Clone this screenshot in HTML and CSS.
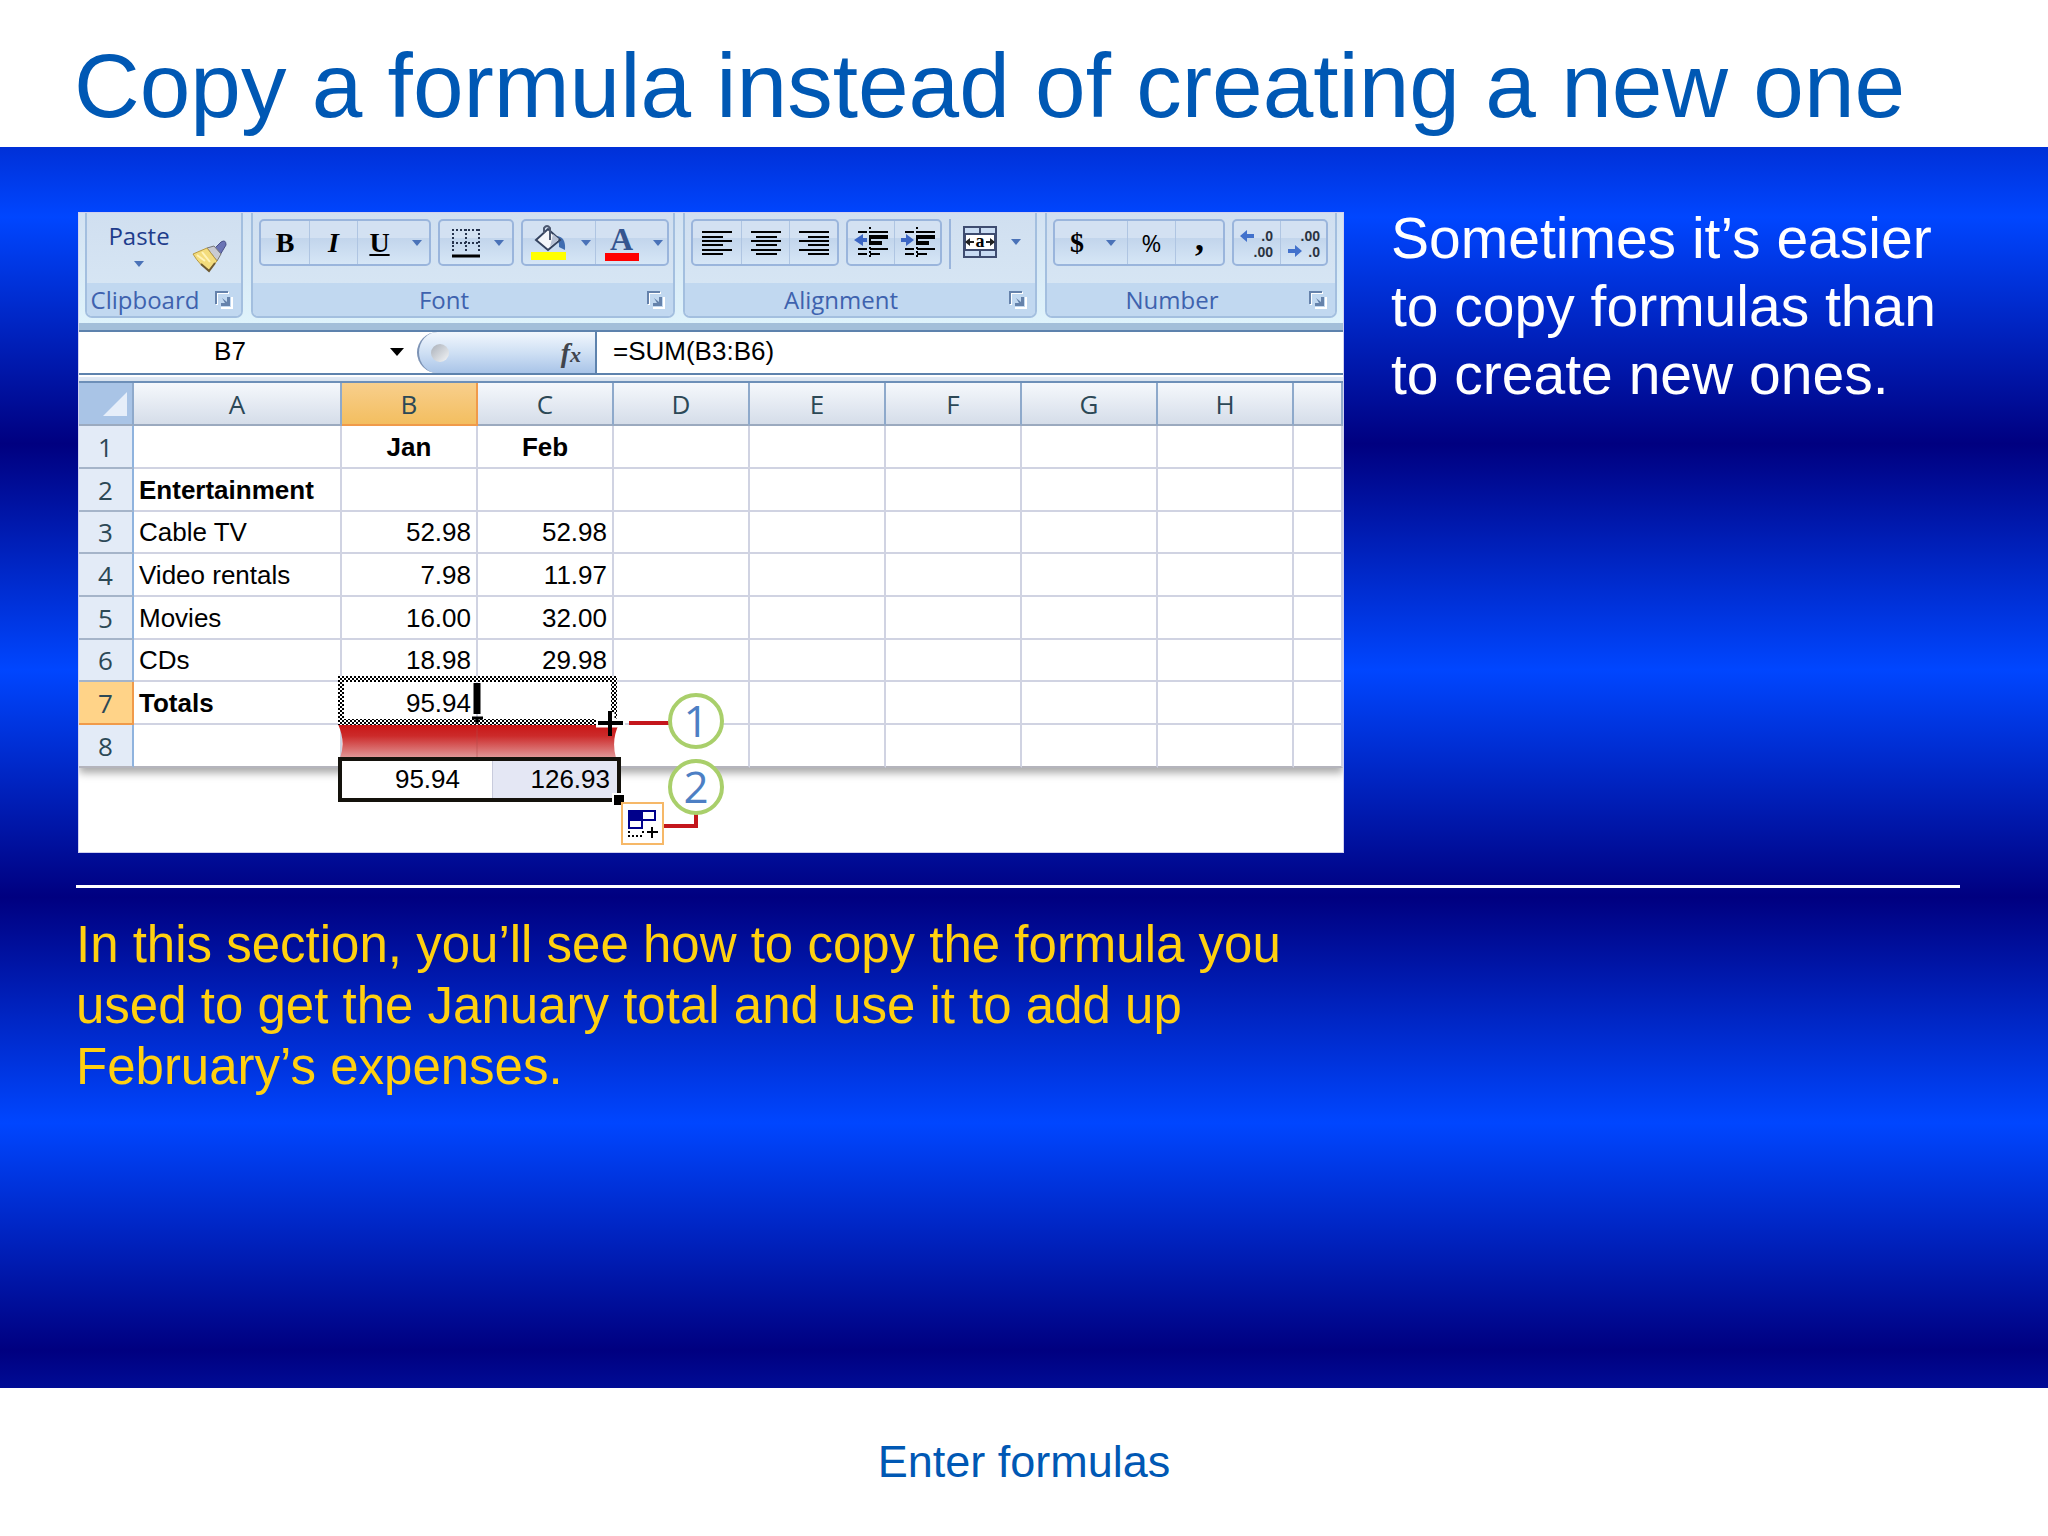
FILE: index.html
```html
<!DOCTYPE html>
<html lang="en">
<head>
    <meta charset="UTF-8">
    <meta name="viewport" content="width=device-width, initial-scale=1.0">
    <title>Enter formulas</title>
    <link rel="stylesheet" href="styles.css">
</head>
<body>
    <header class="slide-header">
        <h1>Copy a formula instead of creating a new one</h1>
    </header>

    <main class="slide-body">
        <div class="intro">
            <div class="excel">
                <!-- Ribbon -->
                <div class="ribbon">
                    <section class="group group-clipboard">
                        <div class="group-tools">
                            <button class="paste">Paste
                                <svg class="caret" viewBox="0 0 10 6"><path d="M0 0h10L5 6z"/></svg>
                            </button>
                            <button class="painter" aria-label="Format Painter">
                                <svg width="36" height="34" viewBox="0 0 36 34">
                                    <path d="M21 11L29 3q5-3 5 3l-6 10z" fill="#6b74b5" stroke="#4a5088"/>
                                    <path d="M15 9l7-2 7 8-4 7z" fill="#c9cbd2" stroke="#777"/>
                                    <path d="M1 15l14-6 10 13-8 9Q8 27 1 15z" fill="#f3dc7c" stroke="#b89a45"/>
                                    <path d="M9 25l8 7 6-8" fill="none" stroke="#6e5a30" stroke-width="2"/>
                                    <path d="M5 16l8 6M10 13l8 10" stroke="#fff3b8" stroke-width="2"/>
                                </svg>
                            </button>
                        </div>
                        <footer class="group-name"><span>Clipboard</span>
                            <svg class="launcher" viewBox="0 0 18 18"><path d="M2 14V2h12M17 6v11H6" fill="none" stroke="#fff" stroke-width="2"/><path d="M1 13V1h12" fill="none" stroke="#6582ab" stroke-width="2"/><path d="M7 7l5 4V6h3v9H6v-3h4z" fill="#6582ab"/></svg>
                        </footer>
                    </section>

                    <section class="group group-font">
                        <div class="group-tools">
                            <div class="btn-set">
                                <button class="tool serif"><b>B</b></button>
                                <button class="tool serif"><i>I</i></button>
                                <button class="tool tool-menu serif"><u>U</u>
                                    <svg class="caret" viewBox="0 0 10 6"><path d="M0 0h10L5 6z"/></svg>
                                </button>
                            </div>
                            <div class="btn-set">
                                <button class="tool tool-menu" aria-label="Borders">
                                    <svg width="28" height="32" viewBox="0 0 28 32">
                                        <path d="M0 3h28M0 16h28M1 2v24M14 2v24M27 2v24" stroke="#26334d" stroke-width="2" stroke-dasharray="2 2"/>
                                        <path d="M0 29h28" stroke="#000" stroke-width="3"/>
                                    </svg>
                                    <svg class="caret" viewBox="0 0 10 6"><path d="M0 0h10L5 6z"/></svg>
                                </button>
                            </div>
                            <div class="btn-set">
                                <button class="tool tool-menu" aria-label="Fill color">
                                    <svg width="36" height="36" viewBox="0 0 36 36">
                                        <path d="M25 11q10 0 9 14l-6-3q1-6-4-7z" fill="#3f6cb0"/>
                                        <path d="M5 15L17 4l12 11-12 10z" fill="#f4f6fa" stroke="#35435f" stroke-width="2"/>
                                        <path d="M19 22l9-8-6-5z" fill="#b7c1d4"/>
                                        <path d="M13 8V3q3-4 6 0v12" fill="none" stroke="#4c5870" stroke-width="2"/>
                                        <path d="M0 27h35v8H0z" fill="#ff0"/>
                                    </svg>
                                    <svg class="caret" viewBox="0 0 10 6"><path d="M0 0h10L5 6z"/></svg>
                                </button>
                                <button class="tool tool-menu" aria-label="Font color">
                                    <span class="font-color">A</span>
                                    <svg class="caret" viewBox="0 0 10 6"><path d="M0 0h10L5 6z"/></svg>
                                </button>
                            </div>
                        </div>
                        <footer class="group-name"><span>Font</span>
                            <svg class="launcher" viewBox="0 0 18 18"><path d="M2 14V2h12M17 6v11H6" fill="none" stroke="#fff" stroke-width="2"/><path d="M1 13V1h12" fill="none" stroke="#6582ab" stroke-width="2"/><path d="M7 7l5 4V6h3v9H6v-3h4z" fill="#6582ab"/></svg>
                        </footer>
                    </section>

                    <section class="group group-alignment">
                        <div class="group-tools">
                            <div class="btn-set">
                                <button class="tool" aria-label="Align left">
                                    <svg width="30" height="26" viewBox="0 0 30 26"><path d="M0 2h30M0 7h21M0 11h30M0 15h21M0 20h30M0 24h21" stroke="#000" stroke-width="2"/></svg>
                                </button>
                                <button class="tool" aria-label="Center">
                                    <svg width="30" height="26" viewBox="0 0 30 26"><path d="M0 2h30M5 7h21M0 11h30M5 15h21M0 20h30M5 24h21" stroke="#000" stroke-width="2"/></svg>
                                </button>
                                <button class="tool" aria-label="Align right">
                                    <svg width="30" height="26" viewBox="0 0 30 26"><path d="M0 2h30M9 7h21M0 11h30M9 15h21M0 20h30M9 24h21" stroke="#000" stroke-width="2"/></svg>
                                </button>
                            </div>
                            <div class="btn-set">
                                <button class="tool" aria-label="Decrease indent">
                                    <svg width="36" height="34" viewBox="0 0 36 34">
                                        <path d="M5 6h9M17 6h18M5 23h9M17 23h18M5 28h9M17 28h10" stroke="#000" stroke-width="2"/>
                                        <path d="M16 11h19M16 17h13" stroke="#000" stroke-width="4"/>
                                        <path d="M17 1v32" stroke="#000" stroke-width="2" stroke-dasharray="2 2"/>
                                        <path d="M1 14l9-6v4h4v4h-4v4z" fill="#3c66c4"/>
                                    </svg>
                                </button>
                                <button class="tool" aria-label="Increase indent">
                                    <svg width="36" height="34" viewBox="0 0 36 34">
                                        <path d="M5 6h9M17 6h18M5 23h9M17 23h18M5 28h9M17 28h10" stroke="#000" stroke-width="2"/>
                                        <path d="M16 11h19M16 17h13" stroke="#000" stroke-width="4"/>
                                        <path d="M17 1v32" stroke="#000" stroke-width="2" stroke-dasharray="2 2"/>
                                        <path d="M14 14L6 8v4H1v4h5v4z" fill="#3c66c4"/>
                                    </svg>
                                </button>
                            </div>
                            <div class="merge">
                                <button class="tool tool-menu" aria-label="Merge and center">
                                    <svg width="34" height="32" viewBox="0 0 34 32">
                                        <path d="M1 1h32v30H1z" fill="#c9dcf3" stroke="#3e4c70" stroke-width="2"/>
                                        <path d="M17 1v30" stroke="#3e4c70" stroke-width="2"/>
                                        <path d="M2 8h30v16H2z" fill="#fff" stroke="#3e4c70" stroke-width="2"/>
                                        <path d="M2 16l5-4v3h4v2H7v3zM32 16l-5-4v3h-4v2h4v3z" fill="#222"/>
                                        <text x="17" y="21" text-anchor="middle" class="merge-letter">a</text>
                                    </svg>
                                    <svg class="caret" viewBox="0 0 10 6"><path d="M0 0h10L5 6z"/></svg>
                                </button>
                            </div>
                        </div>
                        <footer class="group-name"><span>Alignment</span>
                            <svg class="launcher" viewBox="0 0 18 18"><path d="M2 14V2h12M17 6v11H6" fill="none" stroke="#fff" stroke-width="2"/><path d="M1 13V1h12" fill="none" stroke="#6582ab" stroke-width="2"/><path d="M7 7l5 4V6h3v9H6v-3h4z" fill="#6582ab"/></svg>
                        </footer>
                    </section>

                    <section class="group group-number">
                        <div class="group-tools">
                            <div class="btn-set">
                                <button class="tool tool-menu serif"><b>$</b>
                                    <svg class="caret" viewBox="0 0 10 6"><path d="M0 0h10L5 6z"/></svg>
                                </button>
                                <button class="tool percent">%</button>
                                <button class="tool comma">,</button>
                            </div>
                            <div class="btn-set">
                                <button class="tool" aria-label="Increase decimal">
                                    <svg class="decimal" width="36" height="36" viewBox="0 0 36 36">
                                        <path d="M1 11l7-6v4h7v4H8v4z" fill="#4271cc"/>
                                        <text x="34" y="16" text-anchor="end">.0</text>
                                        <text x="34" y="32" text-anchor="end">.00</text>
                                    </svg>
                                </button>
                                <button class="tool" aria-label="Decrease decimal">
                                    <svg class="decimal" width="36" height="36" viewBox="0 0 36 36">
                                        <path d="M16 26l-7-6v4H2v4h7v4z" fill="#4271cc"/>
                                        <text x="34" y="16" text-anchor="end">.00</text>
                                        <text x="34" y="32" text-anchor="end">.0</text>
                                    </svg>
                                </button>
                            </div>
                        </div>
                        <footer class="group-name"><span>Number</span>
                            <svg class="launcher" viewBox="0 0 18 18"><path d="M2 14V2h12M17 6v11H6" fill="none" stroke="#fff" stroke-width="2"/><path d="M1 13V1h12" fill="none" stroke="#6582ab" stroke-width="2"/><path d="M7 7l5 4V6h3v9H6v-3h4z" fill="#6582ab"/></svg>
                        </footer>
                    </section>
                </div>

                <!-- Formula bar -->
                <div class="formula-bar">
                    <input class="name-box" type="text" value="B7" aria-label="Name box">
                    <svg class="name-caret" viewBox="0 0 14 8"><path d="M0 0h14L7 8z"/></svg>
                    <div class="fx">
                        <span class="knob"></span>
                        <em>f<small>x</small></em>
                    </div>
                    <input class="formula" type="text" value="=SUM(B3:B6)" aria-label="Formula">
                </div>

                <!-- Worksheet -->
                <div class="sheet">
                    <table>
                        <colgroup>
                            <col class="col-num"><col class="col-a">
                            <col class="col"><col class="col"><col class="col"><col class="col">
                            <col class="col"><col class="col"><col class="col"><col>
                        </colgroup>
                        <thead>
                            <tr>
                                <th class="corner"><svg width="24" height="24" viewBox="0 0 24 24"><path d="M24 0v24H0z" fill="#e6eef9"/></svg></th>
                                <th>A</th><th class="active">B</th><th>C</th><th>D</th><th>E</th><th>F</th><th>G</th><th>H</th><th></th>
                            </tr>
                        </thead>
                        <tbody>
                            <tr><th>1</th><td></td><td class="month">Jan</td><td class="month">Feb</td><td></td><td></td><td></td><td></td><td></td><td></td></tr>
                            <tr><th>2</th><td class="bold">Entertainment</td><td></td><td></td><td></td><td></td><td></td><td></td><td></td><td></td></tr>
                            <tr><th>3</th><td>Cable TV</td><td class="num">52.98</td><td class="num">52.98</td><td></td><td></td><td></td><td></td><td></td><td></td></tr>
                            <tr><th>4</th><td>Video rentals</td><td class="num">7.98</td><td class="num">11.97</td><td></td><td></td><td></td><td></td><td></td><td></td></tr>
                            <tr><th>5</th><td>Movies</td><td class="num">16.00</td><td class="num">32.00</td><td></td><td></td><td></td><td></td><td></td><td></td></tr>
                            <tr><th>6</th><td>CDs</td><td class="num">18.98</td><td class="num">29.98</td><td></td><td></td><td></td><td></td><td></td><td></td></tr>
                            <tr><th class="active">7</th><td class="bold">Totals</td><td class="num">95.94</td><td></td><td></td><td></td><td></td><td></td><td></td><td></td></tr>
                            <tr><th>8</th><td></td><td></td><td></td><td></td><td></td><td></td><td></td><td></td><td></td></tr>
                        </tbody>
                    </table>

                    <!-- Fill handle drag: before and after -->
                    <div class="fill-demo">
                        <svg width="390" height="175" viewBox="0 0 390 175">
                            <defs>
                                <pattern id="ants" width="4" height="4" patternUnits="userSpaceOnUse">
                                    <path d="M0 0h4v4H0z" fill="#fff"/>
                                    <path d="M0 0h2v2H0zM2 2h2v2H2z" fill="#000"/>
                                </pattern>
                                <linearGradient id="red" x1="0" y1="0" x2="0" y2="1">
                                    <stop offset="0" stop-color="#c81414"/>
                                    <stop offset="0.35" stop-color="#cc2a2a"/>
                                    <stop offset="1" stop-color="#e29a9a"/>
                                </linearGradient>
                            </defs>
                            <path d="M0 48h281q-8 16-3 34H2q6-16-2-34z" fill="url(#red)"/>
                            <path d="M139 50v32" stroke="#b04a4a" opacity="0.5"/>
                            <rect x="3" y="3" width="273" height="43" fill="none" stroke="url(#ants)" stroke-width="6"/>
                            <path d="M139 7v31" stroke="#000" stroke-width="7"/>
                            <path d="M134 42h11M139 42v6" stroke="#000" stroke-width="3"/>
                            <path d="M258 47h29M272 36v12" stroke="#fff" stroke-width="9"/>
                            <path d="M260 47h25M272 35v25" stroke="#000" stroke-width="4"/>
                            <path d="M291 47h42M326 150h32v-14" fill="none" stroke="#c4161c" stroke-width="4"/>
                            <g fill="#fff" stroke="#a9cf6b" stroke-width="4">
                                <circle cx="358" cy="45" r="26"/>
                                <circle cx="358" cy="111" r="26"/>
                            </g>
                            <g class="callout" text-anchor="middle">
                                <text x="358" y="61">1</text>
                                <text x="358" y="127">2</text>
                            </g>
                        </svg>
                        <div class="result"><span>95.94</span><span class="filled">126.93</span></div>
                        <button class="autofill" aria-label="Auto Fill Options">
                            <svg width="32" height="30" viewBox="0 0 32 30">
                                <path d="M2 2h26v9H2z" fill="#fff" stroke="#00008b" stroke-width="2"/>
                                <path d="M2 11h13v8H2z" fill="#fff" stroke="#00008b" stroke-width="2"/>
                                <path d="M1 1h15v11H1z" fill="#00008b"/>
                                <path d="M1 23h2m12 0h2M1 27h16" stroke="#000" stroke-width="2" stroke-dasharray="2 2"/>
                                <path d="M20 23h11M25 18v11" stroke="#000" stroke-width="2"/>
                            </svg>
                        </button>
                    </div>
                </div>
            </div>

            <p class="lead">Sometimes it’s easier to copy formulas than to create new ones.</p>
        </div>

        <hr>

        <p class="note">In this section, you’ll see how to copy the formula you used to get the January total and use it to add up February’s expenses.</p>
    </main>

    <footer class="slide-footer">Enter formulas</footer>
</body>
</html>
```
FILE: styles.css
```css
* {
    box-sizing: border-box;
}

body {
    margin: 0;
    min-height: 100vh;
    display: flex;
    flex-direction: column;
    background: #fff;
    font-family: "Liberation Sans", Arial, sans-serif;
}

button {
    padding: 0;
    border: 0;
    background: none;
    color: #000;
    font: inherit;
}

svg {
    display: block;
}

/* Slide */
.slide-header {
    padding: 34px 74px 9px;
}

h1 {
    margin: 0;
    color: #0058b4;
    font-size: 91px;
    font-weight: normal;
    line-height: 104px;
}

.slide-body {
    flex: 1;
    padding: 57px 88px 40px 76px;
    background: repeating-linear-gradient(#000080 -156px, #0046ff 70px, #000080 297px);
}

.intro {
    display: grid;
    grid-template-columns: 1266px 1fr;
    column-gap: 47px;
    padding-left: 2px;
}

.lead {
    margin: 0;
    color: #fff;
    font-size: 57px;
    line-height: 68px;
}

hr {
    height: 3px;
    margin: 32px 0 26px;
    border: 0;
    background: #fff;
}

.note {
    max-width: 1240px;
    margin: 0;
    color: #ffd010;
    font-size: 51px;
    line-height: 61px;
}

.slide-footer {
    height: 148px;
    display: flex;
    align-items: center;
    justify-content: center;
    color: #0058b4;
    font-size: 45px;
}

/* Excel window */
.excel {
    margin-top: 8px;
    border: 1px solid #d0d0f0;
    background: #fff;
    overflow: hidden;
}

/* Ribbon */
.ribbon {
    display: flex;
    gap: 8px;
    padding: 0 6px 5px;
    background: linear-gradient(#d3e2f2, #dff3fb);
    font-family: "Open Sans", "Noto Sans", sans-serif;
}

.group {
    display: flex;
    flex-direction: column;
    border: 2px solid #a3bfdf;
    border-top: 0;
    border-radius: 0 0 7px 7px;
    background: linear-gradient(#d0dff0, #d9e8f5);
    overflow: hidden;
}

.group-clipboard {
    width: 158px;
}

.group-font {
    width: 424px;
}

.group-alignment {
    width: 354px;
}

.group-number {
    flex: 1;
}

.group-tools {
    height: 70px;
    display: flex;
    align-items: flex-start;
    gap: 7px;
    padding: 6px 6px 0;
}

.group-name {
    height: 33px;
    display: flex;
    align-items: center;
    padding-right: 8px;
    background: #c1d8f0;
    color: #3e62ae;
    font-size: 24px;
    line-height: 32px;
}

.group-name span {
    flex: 1;
    padding-right: 12px;
    text-align: center;
}

.launcher {
    width: 18px;
    height: 18px;
}

.caret {
    width: 10px;
    height: 6px;
    fill: #4a72b8;
}

.paste {
    width: 92px;
    display: flex;
    flex-direction: column;
    align-items: center;
    gap: 8px;
    color: #1e3c8c;
    font-size: 24px;
    line-height: 34px;
}

.painter {
    padding-top: 20px;
}

.btn-set {
    display: flex;
    height: 47px;
    border: 2px solid #9ab5dc;
    border-radius: 5px;
    background: linear-gradient(#d3e1f2 0 40%, #c2d5ec 40%, #d6e6f6);
}

.tool {
    width: 46px;
    display: flex;
    align-items: center;
    justify-content: center;
    gap: 14px;
    font-size: 26px;
    line-height: 32px;
}

.tool + .tool {
    border-left: 1px solid #afc5e2;
}

.btn-set .tool-menu {
    width: 72px;
    padding-left: 4px;
}

.btn-set:first-child .tool:not(.tool-menu) {
    width: 48px;
}

.serif,
.comma {
    font-family: "Liberation Serif", serif;
    font-weight: bold;
}

.serif {
    gap: 22px;
    font-size: 28px;
}

.tool.percent {
    font-size: 24px;
}

.tool.comma {
    padding-bottom: 10px;
    font-size: 36px;
}

.font-color {
    width: 34px;
    height: 36px;
    border-bottom: 8px solid #f00;
    color: #35558f;
    font-family: "Liberation Serif", serif;
    font-size: 32px;
    font-weight: bold;
    line-height: 28px;
}

.merge {
    height: 50px;
    padding-left: 12px;
    border-left: 2px solid #9ab5dc;
}

.merge .tool-menu {
    width: 58px;
    height: 45px;
}

.merge-letter {
    font: bold 18px "Liberation Serif", serif;
}

.decimal text {
    font: bold 14px "Liberation Sans", sans-serif;
    fill: #2b3340;
}

/* Formula bar */
.formula-bar {
    display: flex;
    align-items: center;
    height: 52px;
    border-top: 7px solid #a3bfd9;
    border-bottom: 2px solid #5d82ad;
    box-shadow: inset 0 2px #5d82ad;
}

.formula-bar input {
    min-width: 0;
    padding: 0;
    border: 0;
    background: none;
    color: #000;
    font: 26px "Liberation Sans", Arial, sans-serif;
}

.name-box {
    width: 302px;
    text-align: center;
}

.name-caret {
    width: 16px;
    height: 8px;
    margin-left: 8px;
}

.fx {
    width: 180px;
    height: 41px;
    display: flex;
    align-items: center;
    justify-content: space-between;
    margin: 2px 0 0 12px;
    padding: 0 14px 0 12px;
    border-left: 2px solid #7d93b5;
    border-right: 2px solid #5d82ad;
    border-radius: 24px 0 0 24px;
    background: linear-gradient(#f2f7fd, #cfe0f4 50%, #a9c4e8);
}

.knob {
    width: 18px;
    height: 18px;
    border-radius: 50%;
    background: linear-gradient(135deg, #a9afb8, #f4f6f8);
}

.fx em {
    color: #40444c;
    font: italic bold 28px "Liberation Serif", serif;
}

.fx small {
    font-size: 22px;
}

.formula-bar .formula {
    flex: 1;
    padding-left: 16px;
}

/* Worksheet */
.sheet {
    position: relative;
    margin-top: 6px;
    padding-bottom: 84px;
    box-shadow: 0 -4px #dfe9f6;
}

table {
    width: 100%;
    table-layout: fixed;
    border-spacing: 0;
    border-top: 2px solid #6d8fb8;
    box-shadow: 0 5px 8px #aaa;
    font-size: 26px;
    line-height: 30px;
}

.col-num {
    width: 55px;
}

.col-a {
    width: 208px;
}

.col {
    width: 136px;
}

thead tr,
tbody tr {
    height: 43px;
}

tbody tr:nth-child(3n) {
    height: 42px;
}

th,
td {
    padding: 0 5px;
    border-right: 2px solid #d0d3e2;
    border-bottom: 2px solid #d0d3e2;
    white-space: nowrap;
}

th {
    color: #2c4856;
    font-family: "Open Sans", "Noto Sans", sans-serif;
    font-weight: normal;
}

thead th {
    border-right-color: #8ea9cb;
    border-bottom-color: #9baabf;
    background: linear-gradient(#f5f8fc, #d5dde9);
}

tbody th {
    border-right-color: #8fb3de;
    border-bottom-color: #a5b4c9;
    background: #e3ebf7;
}

thead .corner {
    background: #a9c4e6;
}

.corner svg {
    margin-left: auto;
}

thead .active {
    border-color: #f09a4a;
    background: linear-gradient(#f8cf8c, #f3be60);
}

tbody .active {
    border-color: #f09a4a;
    background: #ffd388;
}

.month,
.bold {
    font-weight: bold;
}

.month {
    text-align: center;
}

.num {
    text-align: right;
}

tbody tr:last-child td,
tbody tr:last-child th {
    border-bottom-color: #b4b4bc;
}

/* Drawn over the grid */
.fill-demo {
    position: absolute;
    left: 259px;
    top: 295px;
}

.callout {
    fill: #4d7fc4;
    font: 44px "Open Sans", sans-serif;
}

.result {
    position: absolute;
    left: 0;
    top: 81px;
    width: 283px;
    height: 45px;
    display: flex;
    border: 4px solid #14120c;
    background: #fff;
    font-size: 26px;
    line-height: 36px;
    text-align: right;
}

.result::after {
    content: "";
    position: absolute;
    right: -7px;
    bottom: -7px;
    width: 10px;
    height: 10px;
    border: solid #fff;
    border-width: 2px 0 0 2px;
    background: #000;
}

.result span {
    width: 150px;
    padding-right: 32px;
}

.result .filled {
    flex: 1;
    padding-right: 7px;
    border-left: 1px solid #c8cbdc;
    background: #e4e7f4;
}

.autofill {
    position: absolute;
    left: 283px;
    top: 126px;
    width: 43px;
    height: 43px;
    display: flex;
    align-items: center;
    justify-content: center;
    border: 2px solid #f6b868;
    background: #fff;
}
```
